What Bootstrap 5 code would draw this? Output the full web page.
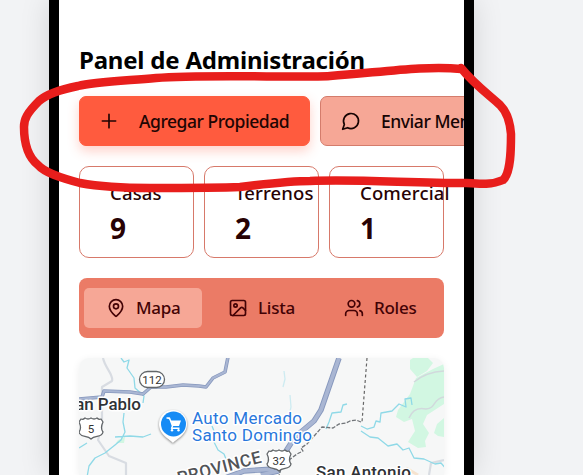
<!DOCTYPE html>
<html lang="es">
<head>
<meta charset="utf-8">
<meta name="viewport" content="width=device-width, initial-scale=1">
<title>Panel de Administración</title>
<link href="https://cdn.jsdelivr.net/npm/bootstrap@5.3.0/dist/css/bootstrap.min.css" rel="stylesheet">
<style>
body{background:#f2f3f5;font-family:"Noto Sans","Open Sans",sans-serif;height:475px;color:#000}
.phone{width:425px;height:475px;margin-left:49px;border:solid #000;border-width:0 10px;background:#fff;padding:44px 20px 0;box-shadow:0 0 28px rgba(0,0,0,.13)}
.panel-title{font-size:24px;line-height:32px;font-weight:700;letter-spacing:-.21px;white-space:nowrap;margin:0 0 20px}
.actions{gap:10px;height:50px}
.action{height:50px;border-radius:7px;font-size:17.5px;letter-spacing:-.46px;font-weight:500;padding:0 19px;white-space:nowrap;border:1px solid #ff5b3e;flex:none;color:#210503;line-height:48px}
.action-main{width:231px;background:#ff5b3e;box-shadow:0 5px 12px rgba(255,91,62,.28)}
.action-soft{width:220px;background:#f6a796;border-color:#d47c6c;color:#160403;padding-left:20px}
.action svg{margin-right:20px}
.stats{gap:10px;margin-top:20px}
.stat{width:115px;height:92px;border:1px solid #d7796a;border-radius:10px;padding:13px 0 0 30px;color:#280204;white-space:nowrap;background:#fff}
.stat-name{font-size:18.5px;line-height:26px;font-weight:500;letter-spacing:.15px}
.stat-value{font-size:28px;line-height:36px;font-weight:700;margin-top:4px}
.tabs{height:60px;margin-top:20px;border-radius:8px;background:#eb7b66;padding:5px;color:#430205;font-size:17px;letter-spacing:-.25px;font-weight:500}
.tab-item{height:40px;border-radius:5px;gap:10px;flex:none}
.tab-on{width:118px;background:#f6a796;padding-left:22px}
.tab-list{margin-left:26px}
.tab-roles{margin-left:49px}
.map{height:117px;margin-top:20px;border-radius:10px 10px 0 0;background:#f6f7f7;box-shadow:0 2px 8px rgba(0,0,0,.07)}
.map svg{font-family:Roboto,sans-serif}
.ico{fill:none;stroke:currentColor;stroke-width:2;stroke-linecap:round;stroke-linejoin:round;flex:none}
.marker{left:0;top:0;pointer-events:none}
</style>
<script src="https://cdn.jsdelivr.net/npm/bootstrap@5.3.0/dist/js/bootstrap.bundle.min.js"></script>
</head>
<body class="overflow-hidden position-relative">
<main class="phone overflow-hidden">
  <h1 class="panel-title">Panel de Administración</h1>
  <div class="actions d-flex">
    <button class="action action-main d-flex align-items-center"><svg class="ico" width="20" height="20" viewBox="0 0 24 24"><path d="M4 12h16M12 4v16"/></svg><span>Agregar Propiedad</span></button>
    <button class="action action-soft d-flex align-items-center"><svg class="ico" width="20" height="20" viewBox="0 0 24 24"><path d="M7.900 20A9 9 0 1 0 4 16.100L2 22Z"/></svg><span>Enviar Mensaje</span></button>
  </div>
  <div class="stats d-flex">
    <div class="stat"><div class="stat-name">Casas</div><div class="stat-value">9</div></div>
    <div class="stat"><div class="stat-name">Terrenos</div><div class="stat-value">2</div></div>
    <div class="stat"><div class="stat-name">Comercial</div><div class="stat-value">1</div></div>
  </div>
  <nav class="tabs d-flex align-items-center">
    <div class="tab-item tab-on d-flex align-items-center"><svg class="ico" width="20" height="20" viewBox="0 0 24 24"><path d="M20 10c0 5-5.500 10.200-7.400 11.800a1 1 0 0 1-1.200 0C9.500 20.200 4 15 4 10a8 8 0 0 1 16 0"/><circle cx="12" cy="10" r="3"/></svg><span>Mapa</span></div>
    <div class="tab-item tab-list d-flex align-items-center"><svg class="ico" width="20" height="20" viewBox="0 0 24 24"><rect x="3" y="3" width="18" height="18" rx="2"/><circle cx="9" cy="9" r="2"/><path d="m21 15-3.100-3.100a2 2 0 0 0-2.800 0L6 21"/></svg><span>Lista</span></div>
    <div class="tab-item tab-roles d-flex align-items-center"><svg class="ico" width="20" height="20" viewBox="0 0 24 24"><path d="M16 21v-2a4 4 0 0 0-4-4H6a4 4 0 0 0-4 4v2M22 21v-2a4 4 0 0 0-3-3.870M16 3.130a4 4 0 0 1 0 7.750"/><circle cx="9" cy="7" r="4"/></svg><span>Roles</span></div>
  </nav>
  <div class="map overflow-hidden">
    <svg class="d-block" width="365" height="117" viewBox="79 358 365 117" fill="none" stroke-linejoin="round">
      <g fill="#d2f7e2">
        <path d="M410 360l3-2h15l5 5-6 8-10 6-7-8z"/>
        <path d="M444 364l-11 5-17 9-6 16-12 16-2 7 8 5 8-3 3 12-7 11 10 6 8-1-1-6 4-8-6-9 4-9 17-11z"/>
        <path d="M434 433l3-9 7-6v19l-6-1zM118 440l7-3-1 6h-8z"/>
      </g>
      <path d="M414 382q12-10 30-11M409 418q5-12 17-9c11-1 6-10 18-12" stroke="#d1d9dc" stroke-width="1.500"/>
      <path d="M103 358c2 10 11 17 9 23l-10 6v38l-4 15 11 16 17 7v16M429 475l2-12 13-3" stroke="#d8dce2" stroke-width="2.200"/>
      <path d="M406 468l12 7" stroke="#f6e3cf" stroke-width="3"/>
      <g stroke="#8fd9e7" stroke-width="1.300">
        <path d="M121 358l3 4 5-2-2 8 7 10 1 10 9 8-1 7M124 413l-1 9 2 10-4 8-6 5-10 8-10 5-6 8-3 17M115 437l15-1 13 1 8-3M79 448l8-5M212 426l2 5-1 9 5 10 6 4 4 10"/>
        <path d="M284 371l1 8-2 8M290 395l1 12-3 13" stroke="#cdebf1"/>
        <path d="M326 429l3-7 3-9 9-1 2-7 4-1M361 426l6 3 7-2 2-6 4 1 1-9 11-2 7-7 7 3-1-8 6-1 1 7"/>
        <path d="M361 431l9 6 8 1 10 8 9-2 6 6 6-2 5 10 10 1 11 5 6-1 6 7 7 5"/>
      </g>
      <g>
        <path d="M79 399l23-2 2-6 26 1 13 2 8-7h15l17-2 16 1 7 1 7-9 12-6 3-15" stroke="#8798bd" stroke-width="3.600"/>
        <path d="M79 399l23-2 2-6 26 1 13 2 8-7h15l17-2 16 1 7 1 7-9 12-6 3-15" stroke="#a9b6d3" stroke-width="2"/>
        <path d="M339 358l-18 52-7 11-19 16-9 14-8 20-17 4M225 478l19-7 30-2" stroke="#8798bd" stroke-width="5.500"/>
        <path d="M339 358l-18 52-7 11-19 16-9 14-8 20-17 4M225 478l19-7 30-2" stroke="#a9b6d3" stroke-width="3.700"/>
      </g>
      <path d="M367 358l-5 64" stroke="#666" stroke-width="1.200" stroke-dasharray="3 2.500"/>
      <path d="M361 422l-5-2-6 1-4 2-7 1-6 4-11-1-7 8-8 9-6 4 2 3-6 3-8 6-3 6-5 2-2 8" stroke="#717579" stroke-width="1.300" stroke-dasharray="4 1.500"/>
      <g stroke="#626669" stroke-width="1.300" fill="#fff">
        <rect x="139.500" y="371.500" width="25" height="16" rx="8"/>
        <path d="M81 419q2 1 4-1 3 2 6 0 3 2 6 0 2 2 4 1l2 3q-3 6 0 10c-1 6-8 3-12 7-4-4-11-1-12-7q3-4 0-10z"/>
        <path d="M269 451q2 1 4-1 3 2 6 0 3 2 6 0 2 2 4 1l2 3q-3 6 0 10c-1 6-8 3-12 7-4-4-11-1-12-7q3-4 0-10z"/>
      </g>
      <g fill="#333" font-size="11.500" text-anchor="middle">
        <text x="152" y="383.500">112</text>
        <text x="91" y="433">5</text>
        <text x="279" y="464.500">32</text>
      </g>
      <path d="M173 443c-3-4-14-8-14-19a14 14 0 0 1 28 0c0 11-11 15-14 19z" fill="#fff" style="filter:drop-shadow(0 1px 1px #888)"/>
      <circle cx="173.500" cy="424" r="12.500" fill="#168bf5"/>
      <path d="M167 418h2.500l3 8h6.500l2-5.500h-10z" fill="#fff"/>
      <path d="M166.500 418h3l3 8-1 2.200h8" stroke="#fff" stroke-width="1.400"/>
      <circle cx="172" cy="430.300" r="1.200" fill="#fff"/><circle cx="178.500" cy="430.300" r="1.200" fill="#fff"/>
      <g stroke="#fff" stroke-width="3" paint-order="stroke" font-weight="500">
        <text x="65" y="410" font-size="17" fill="#303236" textLength="76">San Pablo</text>
        <text x="316" y="477.500" font-size="17" fill="#303236" textLength="95">San Antonio</text>
        <g fill="#2877dc" font-size="17" font-weight="400">
          <text x="192" y="423.500" textLength="110">Auto Mercado</text>
          <text x="192" y="441" textLength="120">Santo Domingo</text>
        </g>
        <text transform="translate(179 484) rotate(-14.500)" font-size="17" fill="#505357" textLength="86">PROVINCE</text>
      </g>
    </svg>
  </div>
</main>
<svg class="marker position-absolute" width="583" height="475" viewBox="0 0 583 475" fill="none" stroke="#e81e1c" stroke-width="8.500" stroke-linecap="round" stroke-linejoin="round">
  <path d="M461 69C425 65 376 73 330 76C300 78 205 74 156 78C120 81 93 82 78 86C63 89 48 93 39 101C27 113 24 119 24 127C24 144 28 157 38 165C45 173 61 178 80 183C102 187 119 188 150 188C178 188 218 188 240 187C265 184 290 181 310 181C355 179 410 183 465 183C480 184 492 185 503 180C511 173 511 149 511 134C510 121 506 111 500 105C489 95 474 84 461 68"/>
</svg>
</body>
</html>
